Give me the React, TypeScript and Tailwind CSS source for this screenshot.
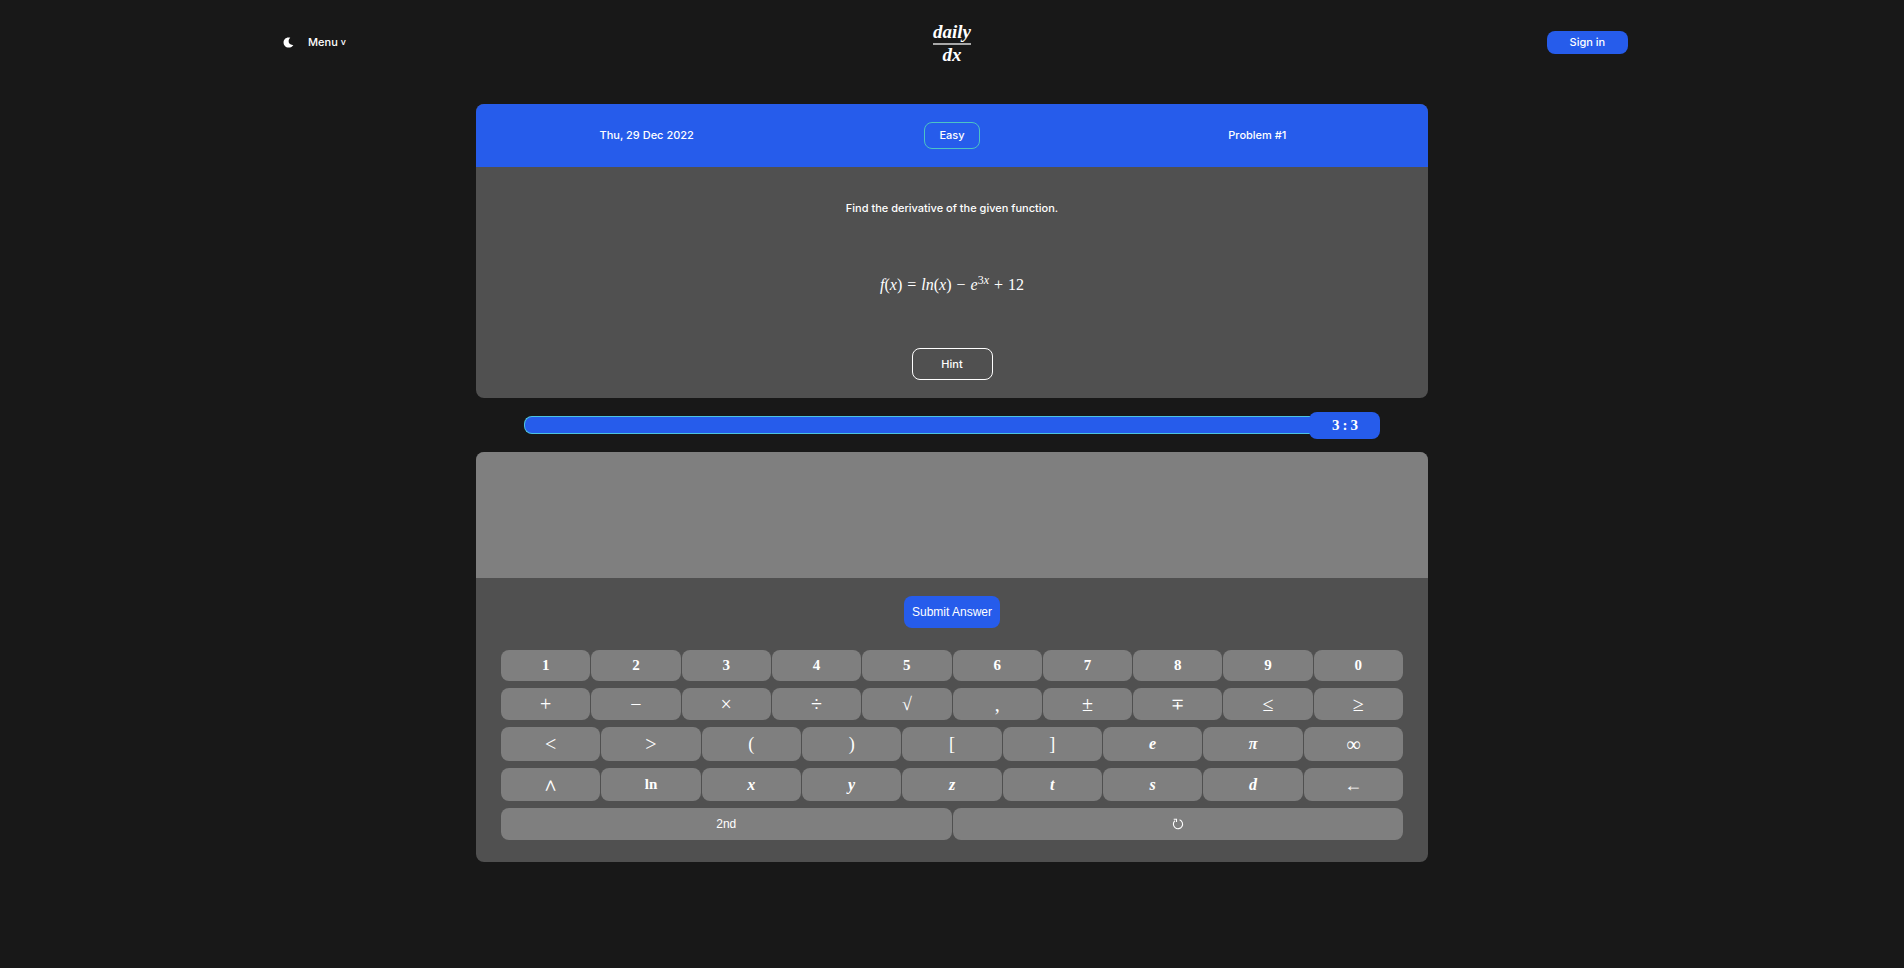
import type { ReactNode } from "react";

const mathFont =
  "font-['Liberation_Serif','DejaVu_Math_TeX_Gyre','DejaVu_Serif',serif]";

type Key = { label: ReactNode; name: string; className?: string };

const digit = "text-[15px] font-bold";
const symbol = "text-[20px]";
const letter = "text-[16px] font-bold italic";

const digits: Key[] = ["1", "2", "3", "4", "5", "6", "7", "8", "9", "0"].map(
  (d) => ({ label: d, name: d, className: digit }),
);

const operators: Key[] = [
  { label: "+", name: "plus", className: symbol },
  { label: "−", name: "minus", className: symbol },
  { label: "×", name: "times", className: symbol },
  { label: "÷", name: "divide", className: symbol },
  { label: "√", name: "square root", className: "text-[18px]" },
  { label: ",", name: "comma", className: symbol },
  { label: "±", name: "plus or minus", className: symbol },
  { label: "∓", name: "minus or plus", className: "text-[16px]" },
  { label: "≤", name: "less than or equal", className: symbol },
  { label: "≥", name: "greater than or equal", className: symbol },
];

const brackets: Key[] = [
  { label: "<", name: "less than", className: symbol },
  { label: ">", name: "greater than", className: symbol },
  { label: "(", name: "open parenthesis", className: "text-[18px]" },
  { label: ")", name: "close parenthesis", className: "text-[18px]" },
  { label: "[", name: "open bracket", className: "text-[18px]" },
  { label: "]", name: "close bracket", className: "text-[18px]" },
  { label: "e", name: "e", className: letter },
  { label: "π", name: "pi", className: letter },
  { label: "∞", name: "infinity", className: symbol },
];

const letters: Key[] = [
  { label: "∧", name: "power", className: "text-[16px]" },
  { label: "ln", name: "natural log", className: digit },
  { label: "x", name: "x", className: letter },
  { label: "y", name: "y", className: letter },
  { label: "z", name: "z", className: letter },
  { label: "t", name: "t", className: letter },
  { label: "s", name: "s", className: letter },
  { label: "d", name: "d", className: letter },
  { label: "←", name: "backspace", className: "text-[18px]" },
];

function KeyRow({ keys, className }: { keys: Key[]; className: string }) {
  return (
    <div className={`grid gap-x-px ${className}`}>
      {keys.map((key) => (
        <button
          key={key.name}
          type="button"
          aria-label={key.name}
          className={`flex items-center justify-center rounded-lg bg-[#7f7f7f] leading-none ${mathFont} ${key.className ?? ""}`}
        >
          {key.label}
        </button>
      ))}
    </div>
  );
}

function MoonIcon() {
  return (
    <svg viewBox="0 0 16 16" className="size-[11px]" fill="currentColor">
      <path d="M8 .800C3.800.800.800 4 .800 8s3 7.400 7.400 7.400c3 0 5.600-1.500 6.900-3.900-4.400.5-6.900-1.800-6.900-5.200C8.200 4 9 2.200 10.600 1.100 9.700.9 8.800.8 8 .8z" />
    </svg>
  );
}

function ResetIcon() {
  return (
    <svg
      viewBox="0 0 12 12"
      className="size-3"
      fill="none"
      stroke="currentColor"
      strokeWidth="1.1"
    >
      <path d="M7.600 1.800A4.600 4.600 0 1 1 3 2.600" />
      <path d="M1.700 1.300 4.500 1.300 4.500 4" />
    </svg>
  );
}

export default function App() {
  return (
    <div className="min-h-screen bg-[#181818] pb-8 font-['Inter',sans-serif] text-[11px] font-medium text-white">
      <header className="grid h-[84px] grid-cols-3 items-center px-[14.5%]">
        <nav className="flex items-center gap-[14px] pl-[7px]">
          <button type="button" aria-label="Toggle dark mode">
            <MoonIcon />
          </button>
          <button type="button" className="flex items-center gap-[3px]">
            Menu <span className="text-[9px]">v</span>
          </button>
        </nav>
        <a
          href="#"
          className={`justify-self-center pt-[3px] text-center text-[19px] leading-5 font-bold italic ${mathFont}`}
        >
          <span className="block border-b-2 border-[#a8a8a8] pb-px">daily</span>
          <span className="block">dx</span>
        </a>
        <button
          type="button"
          className="h-[23px] w-[81px] justify-self-end rounded-lg bg-[#265ceb]"
        >
          Sign in
        </button>
      </header>

      <main className="mx-auto mt-5 w-1/2">
        <section className="overflow-hidden rounded-lg bg-[#505050]">
          <div className="grid h-[63px] grid-cols-3 items-center justify-items-center bg-[#265ceb] px-[18px]">
            <span>Thu, 29 Dec 2022</span>
            <span className="flex h-[27px] items-center rounded-lg border border-[#4cc3c4] px-[14px]">
              Easy
            </span>
            <span>Problem #1</span>
          </div>
          <div className="flex flex-col items-center pt-8 pb-[18px]">
            <p className="leading-[18px]">Find the derivative of the given function.</p>
            <p
              className={`mt-[59px] flex items-baseline gap-[5px] text-[16px] leading-[18px] ${mathFont}`}
            >
              <span>
                <i>f</i>(<i>x</i>)
              </span>
              <span>=</span>
              <span>
                <i>ln</i>(<i>x</i>)
              </span>
              <span>−</span>
              <span>
                <i>e</i>
                <sup className="text-[12px] leading-none">
                  3<i>x</i>
                </sup>
              </span>
              <span>+</span>
              <span>12</span>
            </p>
            <button
              type="button"
              className="mt-[54px] h-8 w-[81px] rounded-lg border border-white"
            >
              Hint
            </button>
          </div>
        </section>

        <div className="mx-auto mt-[14px] flex w-[90%] items-center">
          <div className="mb-px h-[18px] flex-1 rounded-l-lg border border-r-0 border-[#4cc3e0] bg-[#265ceb]" />
          <div
            className={`-ml-2 flex h-[27px] w-[71px] items-center justify-center gap-[3px] rounded-lg bg-[#265ceb] text-[15px] font-bold ${mathFont}`}
          >
            <span>3</span>
            <span>:</span>
            <span>3</span>
          </div>
        </div>

        <section className="mt-[13px] overflow-hidden rounded-lg bg-[#505050]">
          <textarea
            aria-label="Answer"
            className="block h-[126px] w-full resize-none bg-[#7f7f7f] p-4 outline-none"
          />
          <div className="flex flex-col px-[25px] pt-[18px] pb-[22px]">
            <button
              type="button"
              className="h-8 self-center rounded-lg bg-[#265ceb] px-2 font-['Liberation_Sans',sans-serif] text-[12px]"
            >
              Submit Answer
            </button>
            <div className="mt-[22px] flex flex-col gap-[7px]">
              <KeyRow keys={digits} className="h-[31px] grid-cols-10" />
              <KeyRow keys={operators} className="h-8 grid-cols-10" />
              <KeyRow keys={brackets} className="h-[34px] grid-cols-9" />
              <KeyRow keys={letters} className="h-[33px] grid-cols-9" />
              <div className="grid h-8 grid-cols-2 gap-x-px">
                <button
                  type="button"
                  className="rounded-lg bg-[#7f7f7f] font-['Liberation_Sans',sans-serif] text-[12px]"
                >
                  2nd
                </button>
                <button
                  type="button"
                  aria-label="Reset"
                  className="flex items-center justify-center rounded-lg bg-[#7f7f7f]"
                >
                  <ResetIcon />
                </button>
              </div>
            </div>
          </div>
        </section>
      </main>
    </div>
  );
}
